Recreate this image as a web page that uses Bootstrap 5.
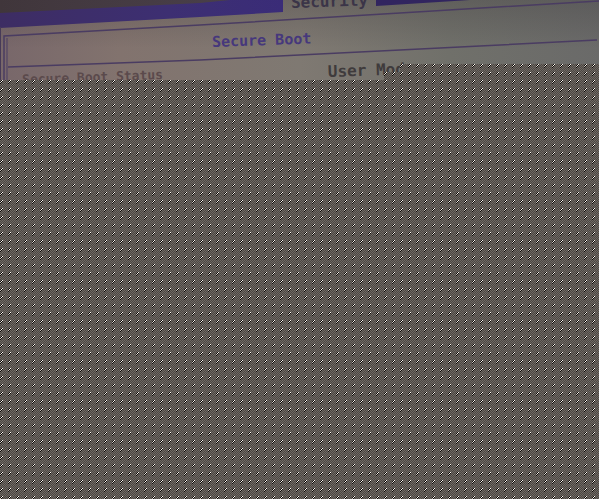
<!DOCTYPE html>
<html lang="en">
<head>
<meta charset="utf-8">
<meta name="viewport" content="width=device-width, initial-scale=1">
<title>Secure Boot</title>
<link href="https://cdn.jsdelivr.net/npm/bootstrap@5.3.0/dist/css/bootstrap.min.css" rel="stylesheet">
<style>
body { background: #67615b; font-family: "DejaVu Sans Mono", monospace; font-weight: 700; }
.bios { height: 80px; }
.bios-text { display: grid; grid-template-rows: 12px 48px 20px; height: 80px; }
.line-text { font-size: 15px; line-height: 18px; color: #413366; white-space: pre; transform: rotate(-2deg); transform-origin: left center; }
.tab-text { margin-left: 291px; font-size: 16px; color: #3b3548; align-self: end; }
.title-text { margin-left: 212px; align-self: center; margin-top: 12px; color: #46387c; }
.status-text { margin-left: 22px; font-size: 13px; color: #5b4a4c; padding-top: 11px; }
.value-text { margin-left: 328px; font-size: 16px; color: #3f3b3c; padding-top: 3px; }
.row-text { display: grid; }
.row-text > * { grid-area: 1 / 1; }
</style>
</head>
<body class="min-vh-100 d-flex flex-column overflow-hidden">
<main class="flex-grow-1 d-flex flex-column position-relative">
  <section class="bios position-relative overflow-hidden">
    <svg class="position-absolute top-0 start-0 w-100 h-100" viewBox="0 0 599 80" preserveAspectRatio="none" aria-hidden="true">
      <defs>
        <linearGradient id="panel"><stop offset="0" stop-color="#78676a"/><stop offset=".2" stop-color="#82736e"/><stop offset=".5" stop-color="#7f7972"/><stop offset=".75" stop-color="#70706a"/><stop offset="1" stop-color="#6a6a69"/></linearGradient>
        <linearGradient id="band"><stop offset="0" stop-color="#3d2d63"/><stop offset=".6" stop-color="#3d2f72"/><stop offset="1" stop-color="#3a2c78"/></linearGradient>
        <linearGradient id="bezel"><stop offset="0" stop-color="#40363b"/><stop offset="1" stop-color="#493f4a"/></linearGradient>
        <linearGradient id="shade" x2="0" y2="1"><stop offset="0" stop-color="#302c30" stop-opacity=".24"/><stop offset=".6" stop-color="#302c30" stop-opacity="0"/></linearGradient>
      </defs>
      <path fill="url(#panel)" d="M0 0H599V80H0z"/>
      <path fill="url(#shade)" d="M0 0H599V80H0z"/>
      <path fill="url(#band)" d="M0 0H283V12L200 17L0 28z"/>
      <path fill="url(#bezel)" d="M0 0H230L200 3L0 13z"/>
      <path fill="#31255f" d="M376 0H470L376 6z"/>
      <path fill="#473a58" d="M0 27H1V80H0z"/>
      <g fill="none" stroke="#4a3c62" stroke-width="1.5">
        <path d="M4 80V36L200 25L400 13L599 1M8 67L200 60L400 50L597 40"/>
        <path stroke-width="1" d="M7 80V38"/>
      </g>
    </svg>
    <div class="bios-text position-relative">
      <div class="line-text tab-text">Security</div>
      <div class="line-text title-text">Secure Boot</div>
      <div class="row-text">
        <div class="line-text status-text">Secure Boot Status</div>
        <div class="line-text value-text">User Mode</div>
      </div>
    </div>
  </section>
  <svg class="position-absolute top-0 start-0 w-100 h-100" shape-rendering="crispEdges" aria-hidden="true">
    <defs>
      <pattern id="grain" width="8" height="8" patternUnits="userSpaceOnUse">
        <path fill="#6e6863" d="M0 0h8v8H0z"/>
        <path fill="#4d4843" d="M3 0h1v1h-1zM5 0h1v1h-1zM7 0h1v1h-1zM4 1h1v1h-1zM6 1h1v1h-1zM3 2h1v1h-1zM5 2h1v1h-1zM7 2h1v1h-1zM2 3h1v1h-1zM4 3h1v1h-1zM6 3h1v1h-1zM1 4h1v1h-1zM3 4h1v1h-1zM5 4h1v1h-1zM7 4h1v1h-1zM0 5h1v1h-1zM2 5h1v1h-1zM4 5h1v1h-1zM6 5h1v1h-1zM1 6h1v1h-1zM3 6h1v1h-1zM5 6h1v1h-1zM7 6h1v1h-1zM0 7h1v1h-1zM2 7h1v1h-1zM4 7h1v1h-1zM6 7h1v1h-1z"/>
        <path fill="#0c0906" d="M1 0h1v1h-1zM0 1h1v1h-1zM2 1h1v1h-1zM1 2h1v1h-1zM0 3h1v1h-1z"/>
        <path fill="#fffaf4" d="M1 1h1v1h-1zM2 0h1v1h-1z"/>
        <path fill="#c4beb8" d="M0 2h1v1h-1z"/>
      </pattern>
    </defs>
    <rect y="80" width="100%" height="100%" fill="url(#grain)"/>
    <rect x="400" y="64" width="100%" height="16" fill="url(#grain)"/>
    <rect x="384" y="72" width="16" height="8" fill="url(#grain)"/>
  </svg>
</main>
<script src="https://cdn.jsdelivr.net/npm/bootstrap@5.3.0/dist/js/bootstrap.bundle.min.js"></script>
</body>
</html>
